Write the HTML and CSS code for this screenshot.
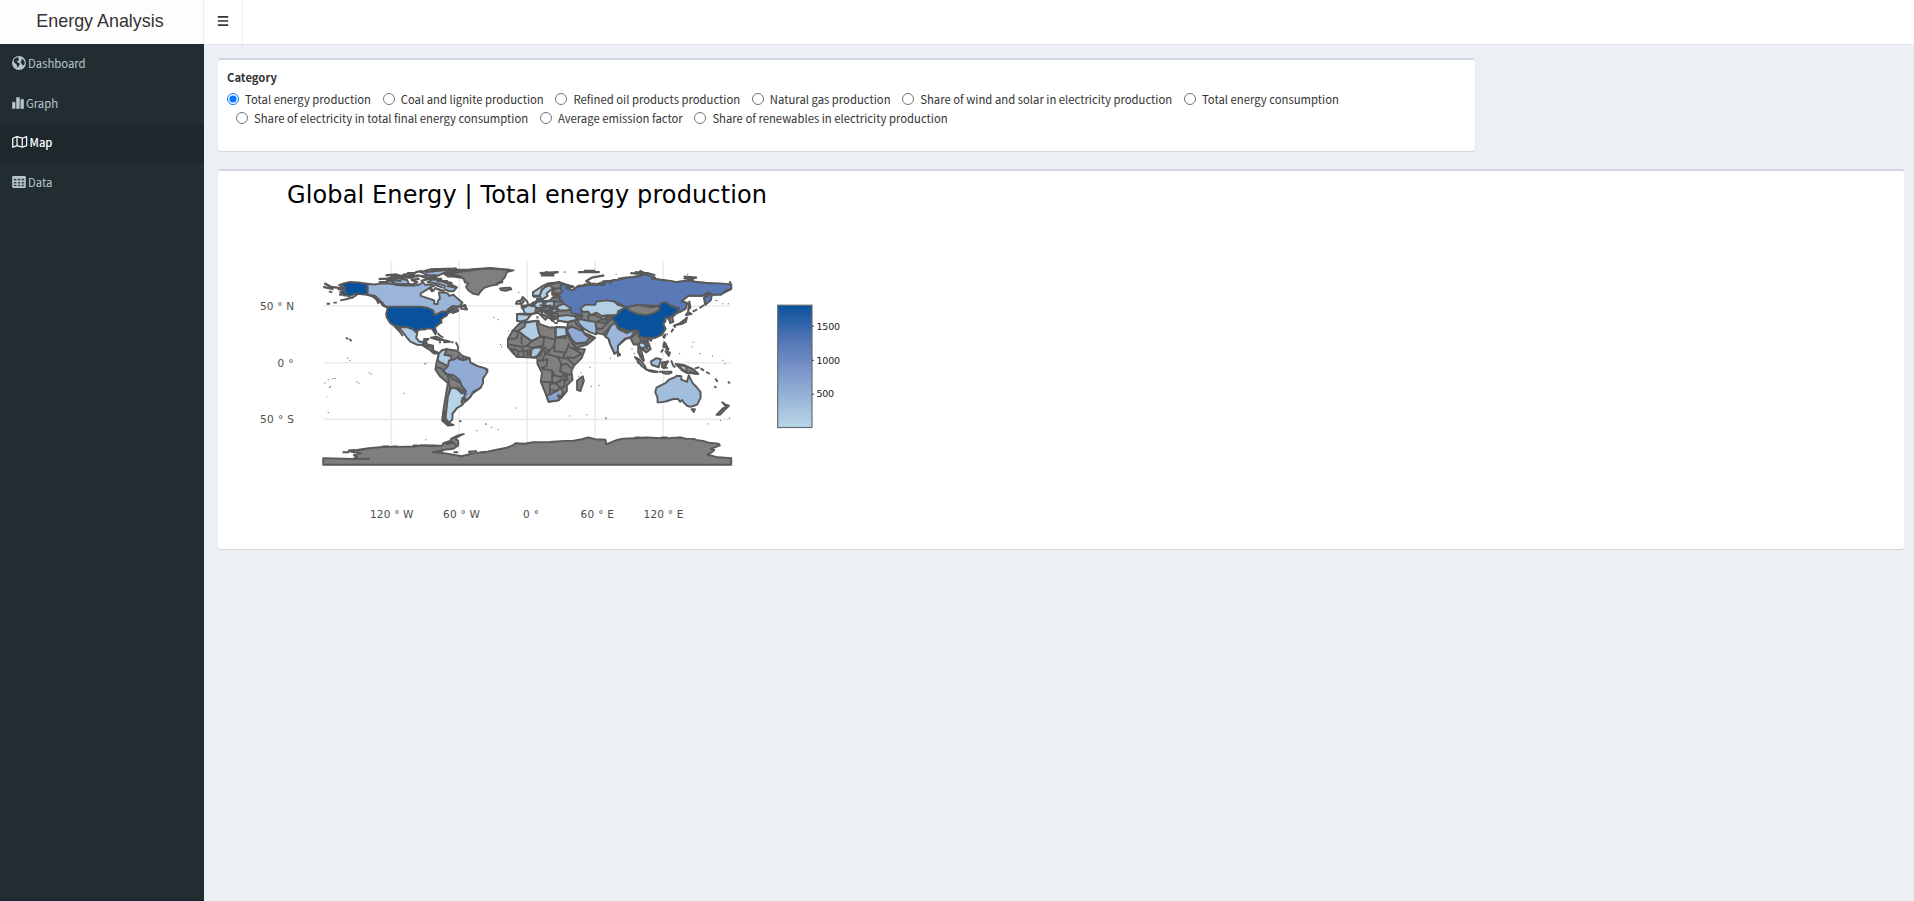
FILE: index.html
```html
<!DOCTYPE html>
<html lang="en">
<head>
<meta charset="utf-8">
<title>Energy Analysis</title>
<link rel="stylesheet" href="styles.css">
</head>
<body>
<header class="header">
  <div class="logo">Energy Analysis</div>
  <nav class="navbar">
    <div class="toggle"><svg width="12" height="12" viewBox="0 0 12 12"><path d="M.8 1.8H11.2M.8 6H11.2M.8 10.2H11.2" stroke="#333" stroke-width="1.7"/></svg></div>
  </nav>
</header>
<div class="wrapper">
  <aside class="sidebar">
    <a class="item"><svg width="14" height="14" viewBox="0 0 14 14"><circle cx="7" cy="7" r="6.9" fill="#b8c7ce"/><path d="M2 3.6Q3.2 2 5 1.5L7 1.3 6.2 2.8 7.2 3.8 5.6 4.9 4.7 6 6.6 6.8 8 7.9 6.9 9.6 5.9 11.9 5 10.3 4.8 8.7 2.8 6.9 1.7 5.2ZM9.2 3.6 10.4 2.7 12 4.4 12.8 6.7 12 9 10.8 9.4 9.9 7.9 8.7 6.8 8.8 5.2 10 4.7Z" fill="#222d32"/></svg><span>Dashboard</span></a>
    <a class="item"><svg width="12" height="14" viewBox="0 0 12 14"><path d="M.3 6.2h2.8v6.3H.3ZM4.5 1.5h2.9v11H4.5ZM8.8 3.4h2.8v9.1H8.8Z" fill="#b8c7ce" stroke="#b8c7ce" stroke-width=".5" stroke-linejoin="round"/></svg><span>Graph</span></a>
    <a class="item active"><svg width="15.5" height="14" viewBox="0 0 16 14"><path d="M.8 3.1 5.2 1.5 10.6 3.1 15.1 1.5V10.8L10.6 12.4 5.2 10.8.8 12.4ZM5.2 1.5V10.8M10.6 3.1V12.4" fill="none" stroke="#fff" stroke-width="1.3" stroke-linejoin="round"/></svg><span>Map</span></a>
    <a class="item"><svg width="14" height="14" viewBox="0 0 14 14"><rect x=".2" y="1" width="13.6" height="12" rx="1.2" fill="#b8c7ce"/><path d="M1.8 3.8h2.6v1.7H1.8ZM5.7 3.8h2.6v1.7H5.7ZM9.6 3.8h2.6v1.7H9.6ZM1.8 6.9h2.6v1.5H1.8ZM5.7 6.9h2.6v1.5H5.7ZM9.6 6.9h2.6v1.5H9.6ZM1.8 9.8h2.6v1.5H1.8ZM5.7 9.8h2.6v1.5H5.7ZM9.6 9.8h2.6v1.5H9.6Z" fill="#3b474d"/></svg><span>Data</span></a>
  </aside>
  <main class="content">
    <section class="box filter">
      <div class="legend">Category</div>
      <div class="row">
        <label><input type="radio" name="c" checked><span>Total energy production</span></label>
        <label><input type="radio" name="c"><span>Coal and lignite production</span></label>
        <label><input type="radio" name="c"><span>Refined oil products production</span></label>
        <label><input type="radio" name="c"><span>Natural gas production</span></label>
        <label><input type="radio" name="c"><span>Share of wind and solar in electricity production</span></label>
        <label><input type="radio" name="c"><span>Total energy consumption</span></label>
      </div>
      <div class="row second">
        <label><input type="radio" name="c"><span>Share of electricity in total final energy consumption</span></label>
        <label><input type="radio" name="c"><span>Average emission factor</span></label>
        <label><input type="radio" name="c"><span>Share of renewables in electricity production</span></label>
      </div>
    </section>
    <section class="box plot">
      <svg class="chart" viewBox="228 182 700 358" width="700" height="358">
        <defs>
          <linearGradient id="bar" x1="0" y1="0" x2="0" y2="1"><stop offset="0" stop-color="#08519c"/><stop offset=".25" stop-color="#4a70b2"/><stop offset=".5" stop-color="#7591c6"/><stop offset=".75" stop-color="#98b3d8"/><stop offset="1" stop-color="#b9d6e8"/></linearGradient>
        </defs>
        <text class="title" x="287" y="203" textLength="480">Global Energy | Total energy production</text>
        <path class="grid" d="M391.3 261V465M459.3 261V465M527.2 261V465M595.2 261V465M663.2 261V465M323 306H731M323 362.7H731M323 419.4H731"/>
        <g class="map" transform="translate(527.2 362.7) scale(1.1333 -1.1333)">
          <!-- Antarctica -->
          <path d="M-180 -90H180V-84.2L168 -83.5 159 -81 163 -79 165 -77 162 -76 170 -73 169 -71.5 160 -70.5 155 -69 150 -68.5 147 -67.2 140 -67 136 -66.2 130 -66.2 122 -66.8 115 -66.5 105 -66 95 -66.6 85 -67 80 -68 76 -69.5 70 -72 69 -68 60 -67.5 54 -66 48 -67.5 40 -69 33 -69 20 -70 5 -70.2 -2 -71.5 -10 -71 -13 -73 -18 -75 -28 -77 -35 -78.5 -48 -80 -58 -82.5 -72 -80 -80 -79 -75 -77 -65 -76 -61 -73 -61 -69 -64 -66 -60 -64 -56 -63 -62 -64.5 -67 -67 -68 -69 -74 -71 -75 -73 -85 -73.5 -93 -72.8 -100 -74 -115 -74.3 -125 -74.2 -140 -75.5 -150 -77 -157 -78 -153 -79 -147 -80 -153 -81.5 -150 -83 -154 -85 -180 -84.2Z"/>
          <path class="line" d="M-154 -85-139 -84.7M-163 -79 -157 -79M-150 -77.6-143 -76.3M-76 -79-83 -79 -74 -77.7M-61 -79-65 -79M-52 -78.5-45 -78 -52 -79M-41 -79-36 -79M-101 -73-97 -73M-91 -73-81 -73M-64 -67-57 -63M-70 -71-67 -69M-72 -72-66 -71M-73 -71-66 -70-63 -73M-158 -77.5-152 -77M-128 -74H-122M-119 -74H-114M118 -66H124M133 -66H136M95 -66H100"/>
          <!-- Greenland and Iceland -->
          <path d="M-73 78.2-68 80-60 82-52 82-45 82.7-32 83.5-24 82.8-20 82.2-12 81.5-18 80-19 77-20 75-22 73-22 71-26 70-26 69-32 68-38 66-41 63-43 60-48 61-52 64-54 67-52 70-55 71-56 74-58 75-65 76-70 76Z"/>
          <path class="line" d="M-50 82-35 83-15 82M-22 72-27 70M-58 76-70 78-60 80-45 82"/>
          <path d="M-24 65.5-20 66-15 66.2-14 64.8-19 63.5-23 64Z"/>
          <!-- North America -->
          <path class="c-can" d="M-141 69.6-135 69-128 70-120 69.6-115 68.5-108 68-100 68-95 69-92 71-90 68.7-85 69-82 68-86 66-91 63-94 61-94 59-88 57-82 55-82 52-79 51.5-79 54-77 57-78 62-73 62-70 61-69 59-65 60-62 57-57 53-59 51-56 50-60 49.5-66 50-70 47-65 48-64 46-61 45.5-66 44-67 45-69 47-71 45-75 45-79 43-82 42-83 46-88 48-95 49-123 49-128 51-130 55-134 59-140 60-141 60Z"/>
          <path class="c-us" d="M-141 69.6-149 70.7-156 71.2-162 70-166 68.5-162 67-167 65.5-161 64.5-165 62-162 59.5-157 58.8-152 60.5-148 60.5-141 60ZM-123 48.7-124.5 43-124 40-121 35-117 32.5-111 31.3-106 31.5-103 29.2-99 27-97 26-97 28-94 29.5-90 29.3-88 30.3-84 30-82.5 27.5-81 25-80 27-81.5 31-78 34-75.5 35.5-76 38-74 40-71 41.5-70 43.5-67 45-69 47-71 45-75 45-79 43-82 42-83 46-88 48.5-95 49.5-123 49.5Z"/>
          <path class="c-can" d="M-124 73-116 75-106 73-104 69-115 69-118 71ZM-88 71-83 73.5-78 73-73 71-67 69-62 66.5-65 63-69 63-73 65-73 68-80 70ZM-93 76-88 77-80 76-80 74.8-90 74.8ZM-94 80-85 82.5-70 83-62 82.5-72 80-78 77-88 77.5ZM-86 65.5-82 64-84 63ZM-59 49-55 51-53 47-58 47.5Z"/>
          <path class="line arctic" d="M-131 74H-124L-118 76H-112L-108 78-100 78-98 80-93 81M-125 77-116 78-110 76-102 77-96 76M-106 79-99 79M-131 71-124 71 -118 73-111 72M-119 70-110 69-101 69-97 71-102 73-95 74M-113 75-102 75-97 77-90 76M-90 80-80 81-63 83-85 82M-94 72-87 74-75 74M-78 73-66 70M-71 68-62 66M-70 72-80 72M-82 66-73 63M-141 60-135 58-132 55-128 53-126 50-123 48.5M-137 59-133 56-131 52M-128 51-124 49M-179 70-173 67-166 66M-180 67-171 65M-167 65-160 64M-66 44-61 46M-67 46-60 50M-56 49-54 51"/>
          <path class="line" d="M-82 69-74 66M-175 63-172 62M-177 52-174 52M-171 53-168 53M-165 55-160 56-153 58M-166 60-163 60M-155 57-150 60M-164 68-160 66M-163 63-159 61M-63 47-60 47"/>
          <path class="c-light" d="M-117 32.5-113 31-109 26-106 22-103 18.5-97 15.8-93 15.5-91 18-87 21-91 21-91 18.5-95 18.5-98 22-97 26-101 29.5-106 31.5-111 31.3Z"/>
          <path d="M-117 32-114 30-110 24-113 28ZM-92 15-89 18-88 16-83 15-84 11-79 9-77 8-82 8-87 12ZM-85 22-80 23-74 20-78 20ZM-74 20-68 18.5-73 18Z"/>
          <path class="line" d="M-91 15-83 14-83 10-77 8M-78 18H-76M-67 18H-65M-79 26-77 24-74 22M-63 18-61 14-61 11M-157 21-155 19M-160 22-158 21"/>
          <!-- South America -->
          <path d="M-78 8-75 11-71 12-62 10.5-57 6-51 4-50 0-44 -3-35 -6-39 -14-41 -22-48 -27-53 -33-58 -37-62 -40-66 -45-67 -50-69 -54-65 -55-70 -55.5-75 -51-74 -42-72 -30-70 -18-77 -12-81 -6-80 0Z"/>
          <path class="c-light" d="M-78 8-75 11-71 12-73 7-67 6-67 1-70 -3-76 0-79 2Z"/>
          <path class="c-bra" d="M-70 -3-69 2-64 3-61 5-57 2-51 4-50 0-44 -3-37 -5-35 -8-39 -14-39 -18-41 -22-48 -26-50 -30-53 -33-57 -30-54 -25-58 -20-60 -15-65 -11-72 -10-74 -7Z"/>
          <path class="c-arg" d="M-66 -22-62 -23-58 -27-54 -27-58 -34-57 -37-62 -40-66 -45-66 -50-69 -53-72 -49-71 -39-70 -30-68 -24Z"/>
          <path class="line" d="M-80 -4-76 -5-70 -11-69 -18-68 -23M-69 -11-65 -15-58 -18M-62 -22-58 -24-55 -26M-58 -31-54 -34M-73 7-67 6M-61 7-60 2M-57 6-56 2M-53 5-54 2M-73 -42-74 -50-70 -54-65 -55M-74 -45-73 -53M-60 -51.5-58 -51.8M-37 -54.2H-36"/>
          <!-- Africa -->
          <path d="M-6 35.5 10 37 11 34 20 31 33 31 35 27 38 20 43 12 51 12 48 4 41 -3 39 -8 40 -15 35 -20 35 -25 31 -30 27 -33.5 19 -34.5 17 -29 12 -17 13 -9 9 -1 9 4 5 4.5 -5 5 -9 5 -13 9 -17 14 -17 21 -13 28ZM44 -16 49 -12 50 -16 47 -25 44 -24Z"/>
          <path class="c-light" d="M-2 35 8 37 9 32 10 27 12 23 4 19 -3 24-8 28-2 32ZM25 31.5 34 31 35 24 25 22Z"/>
          <path class="c-nig" d="M3 6 4 12 7 13.5 14 13 9 6 5 4.5Z"/>
          <path class="c-saf" d="M17 -29 20 -28 24 -26 30 -22.5 32 -27 28 -33 19 -34.5Z"/>
          <path class="line" d="M-13 28H-8L-9 22-12 21H-17M-8 28-3 24 4 19 0 15-5 14-10 15-16 16M-5 16-5 24M4 19 12 23 15 22 14 15 4 13 0 15M12 23 15 23 25 20 24 16 22 13 16 8 14 13M10 27 12 23M25 20V31.5M25 22H35M24 16 24 10 34 9 37 17M16 8 27 5 31 4 34 9M15 14 20 9M35 5 41 4 48 8 43 11 37 14M27 5 30 -1 29 -8 33 -9 30 -13 24 -11 22 -7 17 -6 13 -6M16 8 13 2 18 3 17 -3 12 -5M9 2H15M31 4 35 4 42 -2M30 -2 35 -1 39 -5M22 -7 22 -17 12 -17M24 -11 22 -13 22 -17 25 -18 30 -15 33 -15 33 -9M25 -18 20 -19 20 -28M20 -22 20 -24 26 -25 29 -22 25 -18M29 -22 33 -21 33 -16 35 -15 35 -10 40 -11M26 -18 30 -16M27 -29 29 -29 28 -31ZM31 -26V-28M34 -10 36 -16M-16 12-11 12-8 10-8 5M-11 12-13 10M-8 10-3 10-3 5M-3 10 0 11 0 6M2 12 2 6M-5 13-3 10M-15 13-11 8M14 13 12 7 10 5"/>
          <!-- Eurasia -->
          <path d="M-9 37-9 43-2 43.5-1 46-5 48.5 2 51 8 54 9 57 11 56 11 54 20 55 22 57 24 59 30 60 22 60 22 63 25 65 20 65 17 61 18 59 13 55.5 11 59 6 58 5 62 12 66 18 70 28 71 40 67 35 66 40 64 45 68 60 69 70 72 80 73 100 77 113 74 130 71 150 71 170 69.5 180 69 180 65 172 61 163 60 156 57 160 61 155 59 142 59 136 54 141 52 139 47 131 43 128 40 129 36 126 35 125 39 121 39 118 39 122 37 120 34 122 30 119 25 110 21 106 20 109 12 105 9 100 13 103 2 98 9 98 16 94 16 91 22 87 21 80 15 80 10 77 8 73 17 72 21 67 25 57 27 50 30 48 30 51 26 56 24 60 22 53 16 43 13 38 21 35 29 36 36 27 37 27 41 22 37 19 42 13 46 13 43 18 40 16 38 10 44 4 43 0 39-5 36.5Z"/>
          <path class="c-rus" d="M28 71 33 69 41 67 34 66 40 64 45 67 53 68.5 60 68.5 68 69 67 72 73 72 73 70 76 73 80 73 87 75 98 76 104 78 113 75 110 74 120 73 128 72 131 71 140 72.5 152 71 162 70 170 70 180 69 180 65 176 64 171 60 163 60 162 55 157 51 156 57 162 61 160 62 154 59 142 59 136 54 141 53 140 48 135 45 131 44 134 48 127 50 122 53 117 50 108 49 98 51 87 49 77 54 70 55 60 51 51 51 48 46 48 42 39 44 38 47 32 52 28 57 28 60 31 63 29 66 30 69Z"/>
          <path class="c-kaz" d="M47 48 51 51 60 51 61 54 70 55 77 54 80 51 87 49 80 45 80 42 70 42 66 41 61 44 56 42 54 45 49 45Z"/>
          <path class="c-us" d="M74 40 80 43 82 46 87 49 92 45 97 43 105 42 112 44 117 47 116 50 119 53 123 53 127 50 134 48 130 43 125 40 121 39 122 37 120 34 122 30 119 25 113 22 108 22 103 22 98 24 98 28 90 28 80 31 78 35Z"/>
          <path class="c-ind" d="M69 23 71 27 74 33 78 35 80 30 88 26 95 29 92 23 86 21 80 15 80 10 77 8 73 17 72 21Z"/>
          <path class="c-iran" d="M44 39 48 38 54 37 60 36 61 30 61 25 55 27 50 30 46 34Z"/>
          <path class="c-sau" d="M35 29 39 32 46 29 49 28 51 25 55 22 52 18 43 17 39 21Z"/>
          <path class="c-light" d="M27 37 27 41 35 42 42 41 44 38 36 36ZM-9 37-9 43 3 42 0 38-5 36.5ZM-2 43.5-4 48 2 51 8 49 7 44 3 43ZM6 51 9 54 14 54 14 49 8 48ZM14 51 18 54.5 24 54 23 49.5ZM22 48 32 52 39 48 35 46 30 46ZM22 44 28 46 27 48 22 47ZM7 44 12 46 13 43 18 40 16 38 10 44ZM13 55.5 11 59 13 64 18 69 23 66 17 61 18 59ZM5 59 5 62 14 68 22 70 13 65 11 59ZM56 42 61 44 66 41 71 41 68 38 60 42ZM98 17 101 18 105 16 103 13 100 13Z"/>
          <path class="line" d="M20 69 28 71 31 69 29 66 22 65M23 62 28 61M22 57 30 58M23 54 31 54 32 52M14 49 23 49 22 46 15 46ZM13 46 20 45 22 42M18 45 19 42 24 41M20 48 21 44 28 43M15 42 20 39 24 36M17 43 23 43M20 41 23 39M22 40 26 41M11 51 18 49 21 51M7 51 3 50 5 53 8 54M9 47 15 48M36 36 42 37 44 33 48 30M39 32 35 31M42 41 49 41 46 38 44 39M54 37 54 42 61 42M61 36 66 38 74 38 70 34 66 30 61 30M61 36 68 35 72 37M67 25 70 28 74 33M66 38 74 41 79 42M70 40 77 40M88 28 81 29M92 22 98 28M98 24 101 19 98 16M103 22 107 16 105 12M101 20 106 18M88 49 98 51 117 50M55 22 60 22M43 17 48 17 53 17M38 21 43 13 45 12M32 36H35M24 35H27M9 41 9 39M26 39 23 38M50 69 60 70M33 68 41 67M-5 50 1 51 0 54-4 58-5 56-3 54-5 52ZM-10 52-6 52-6 55-9 54ZM142 73H147M180 71H178M70 72 67 68"/>
          <path class="line arctic" d="M68 77 57 75 52 72 56 70M80 74 88 75M91 79 106 78 99 81M95 80 106 79 113 77M138 76 149 75 142 74 138 75M11 79 27 80 13 77 24 77M45 80 64 80M50 81H60M16 80 22 78"/>
          <!-- Japan and south-east Asia -->
          <path d="M130 33 136 34 140 36 141 40 139 38 135 35ZM140 42 145 43 142 45ZM142 46 143 54 144 49ZM120 23 122 25 121 22ZM120 14 121 18 122 17 124 13ZM122 10 126 9 125 6ZM119 -9 124 -10M80 9 82 7 80 6ZM131 -1 138 -2 147 -6 151 -10 141 -9 137 -7ZM105 -6 115 -8 108 -7.5ZM119 0 124 1 121 -5 119 -4Z"/>
          <path class="c-oz" d="M95 5 99 3 104 -3 105 -6 101 -3ZM109 1 114 4 118 3 116 -4 110 -2ZM132 -2 140 -3 141 -9Z"/>
          <path class="line" d="M98 10 100 5 103 1M119 0 125 1M120 -3 124 -5M122 0 122 -5M127 2 129 -3M146 45 150 47M152 48 156 51M108 20 110 19M123 25 124 25M127 27 129 30M118 9 120 12M122 12 124 11 125 13M121 15 124 13M116 -8 128 -8M148 -5 152 -4M153 -5 156 -7M158 -8 161 -10M165 -21 167 -22M166 -14 168 -17M177 -17 179 -18M102 2 100 6M97 1 99 -1M110 -8 115 -8.5M129 -4 131 -3M124 -10 128 -8.5M143 -8 150 -10M134 -1 136 -3M129 33 131 31M69 -49 70 -49"/>
          <!-- Oceania -->
          <path class="c-oz" d="M114 -22 117 -20.5 122 -18 125 -15 130 -13 132 -11.5 136 -12 136 -15 141 -17 142.5 -11 144 -14 146 -18 149 -21 153 -26 153 -31 150 -37 147 -38 144 -39 141 -38 138 -35 137 -33 135 -34.5 133 -32 129 -32 123 -34 118 -35 115 -35 115 -31 113 -26Z"/>
          <path d="M145 -41 148 -41 147 -43.5ZM172 -35 175 -37 178 -38 175 -41 173 -40 167 -46 170 -46 174 -42 175 -38Z"/>
          <path class="dots" d="M-172 -14h1M-176 -15h1M-170 -14h1M-179 -18h1M-174 -21h1M-175 -22h1M-149 -18h1M-151 -17h1M-157 2h1M-159 4h1M-177 -30h.5M-176 -44h1M-140 -9h1M-138 -10h1M-91 -1h2M-30 40h1M-26 38h1M-24 16h1M-23 14h1M-17 28h1M-14 28h1M-8 62h1M45 -12h1M47 -9h1M55 -4h1M56 -21h1M63 -20h1M73 4h1M134 8h1M145 14h1M146 18h1M152 8h1M163 6h1M172 2h1M174 -1h1M92 12h1M94 8h1M37 -47h1M52 -46h1M-10 -40h1M-32 -57h1M-26 -59h1M-45 -60h1M-90 -68h1M159 -54h1M170 -51h1M178 -49h1M172 52h1M177 52h1M166 55h2M141 78h1M78 78h1M32 80h2M-109 -27h1"/>
        </g>
        <g class="tick">
          <text x="260" y="310" textLength="34">50 ° N</text><text x="277.5" y="367" textLength="16">0 °</text><text x="260" y="423" textLength="34">50 ° S</text>
          <text x="370" y="518" textLength="43.5">120 ° W</text><text x="443" y="518" textLength="37">60 ° W</text><text x="523" y="518" textLength="16">0 °</text><text x="580.5" y="518" textLength="33.5">60 ° E</text><text x="643.5" y="518" textLength="40">120 ° E</text>
        </g>
        <rect x="777.7" y="305.2" width="34.3" height="122.3" fill="url(#bar)" stroke="#646b72" stroke-width="1.2"/>
        <path d="M812 326.3h2M812 360.3h2M812 394.3h2" stroke="#444"/>
        <g class="barlab"><text x="816.5" y="330" textLength="23.5">1500</text><text x="816.5" y="364" textLength="23.5">1000</text><text x="816.5" y="397" textLength="17.5">500</text></g>
      </svg>
    </section>
  </main>
</div>
</body>
</html>
```
FILE: styles.css
```css
* { box-sizing: border-box; }
body { margin: 0; height: 901px; overflow: hidden; display: flex; flex-direction: column; background: #ecf0f5; color: #333; font-family: "Noto Sans CJK SC", "Noto Sans", sans-serif; font-size: 11.3px; }
.header { display: flex; height: 44px; }
.logo { width: 204px; border-right: 1px solid #eee; background: #fdfdfd; text-align: center; font: 17.9px/42px "Liberation Sans", Arial, sans-serif; padding-right: 3px; }
.navbar { flex: 1; display: flex; background: #fff; }
.toggle { width: 39px; height: 44px; display: flex; align-items: center; justify-content: center; border-right: 1px solid #eee; padding-bottom: 2px; }
.wrapper { flex: 1; display: flex; }
.sidebar { width: 204px; background: #222d32; border-bottom: 2px solid #1e2835; }
.item { display: flex; align-items: center; gap: 2px; height: 39.75px; padding-left: 12px; padding-bottom: 2px; color: #b8c7ce; line-height: 18px; }
.item svg { flex: none; }
.item.active { background: #1e282c; color: #fff; font-weight: 500; }
.content { flex: 1; padding: 13px 10px 0 14px; border-top: 1px solid #e1e4e9; display: flex; flex-direction: column; gap: 18px; }
.box { background: #fff; border-top: 2.6px solid #d2d6de; border-radius: 3px; box-shadow: 0 1px 1px rgba(0, 0, 0, .12); }
.filter { width: 1257px; height: 93px; padding: 8px 9px 0; }
.legend { font-weight: 700; line-height: 18px; margin-bottom: 3px; }
.row { display: flex; gap: 11.7px; height: 19px; }
.row.second { padding-left: 9px; }
.row label { display: flex; align-items: center; gap: 6px; white-space: nowrap; line-height: 18px; }
.row input { width: 12px; height: 12px; margin: 1px 0 0; }
.plot { height: 380px; padding: 11px 10px 10px; }
.chart { display: block; }
.title { font: 24px "DejaVu Sans", Verdana, sans-serif; fill: #000; }
.grid { stroke: #ebebeb; stroke-width: 1.6; fill: none; }
.map path { fill: #7f7f7f; stroke: #595959; stroke-width: 1.7; stroke-linejoin: round; }
.map .line { fill: none; }
.map .arctic { stroke-width: 2; }
.map .dots { fill: none; stroke-width: .8; }
.map .c-can { fill: #9bb5d8; }
.map .c-us { fill: #08519c; }
.map .c-light { fill: #b1cde4; }
.map .c-bra { fill: #92abd4; }
.map .c-arg { fill: #b7d4e8; }
.map .c-nig { fill: #a9c5e0; }
.map .c-saf { fill: #86a3cf; }
.map .c-rus { fill: #5a7ab7; }
.map .c-kaz { fill: #b3cfe4; }
.map .c-ind { fill: #9cb6da; }
.map .c-iran { fill: #a2bde0; }
.map .c-sau { fill: #91abd5; }
.map .c-oz { fill: #a3bddc; }
.tick text { font: 10.5px "DejaVu Sans", Verdana, sans-serif; fill: #4d4d4d; }
.barlab text { font: 9.5px "DejaVu Sans", Verdana, sans-serif; fill: #222; }
```
